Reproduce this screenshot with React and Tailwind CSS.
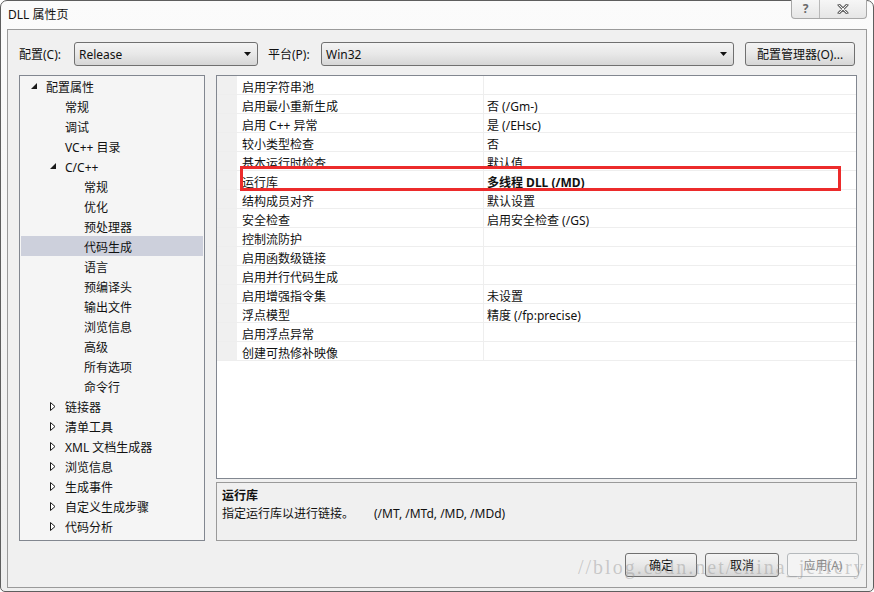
import React from 'react';

const FONT = { fontFamily: '"Noto Sans", "Noto Sans CJK SC", sans-serif' };

const tree = [
  { label: '配置属性', level: 0, open: true },
  { label: '常规', level: 2 },
  { label: '调试', level: 2 },
  { label: 'VC++ 目录', level: 2 },
  { label: 'C/C++', level: 1, open: true },
  { label: '常规', level: 3 },
  { label: '优化', level: 3 },
  { label: '预处理器', level: 3 },
  { label: '代码生成', level: 3, selected: true },
  { label: '语言', level: 3 },
  { label: '预编译头', level: 3 },
  { label: '输出文件', level: 3 },
  { label: '浏览信息', level: 3 },
  { label: '高级', level: 3 },
  { label: '所有选项', level: 3 },
  { label: '命令行', level: 3 },
  { label: '链接器', level: 1, open: false },
  { label: '清单工具', level: 1, open: false },
  { label: 'XML 文档生成器', level: 1, open: false },
  { label: '浏览信息', level: 1, open: false },
  { label: '生成事件', level: 1, open: false },
  { label: '自定义生成步骤', level: 1, open: false },
  { label: '代码分析', level: 1, open: false },
];

const indent = {
  0: 'pl-[10px]',
  1: 'pl-[29px]',
  2: 'pl-[29px]',
  3: 'pl-[48px]',
};

const props = [
  ['启用字符串池', ''],
  ['启用最小重新生成', '否 (/Gm-)'],
  ['启用 C++ 异常', '是 (/EHsc)'],
  ['较小类型检查', '否'],
  ['基本运行时检查', '默认值'],
  ['运行库', '多线程 DLL (/MD)', true],
  ['结构成员对齐', '默认设置'],
  ['安全检查', '启用安全检查 (/GS)'],
  ['控制流防护', ''],
  ['启用函数级链接', ''],
  ['启用并行代码生成', ''],
  ['启用增强指令集', '未设置'],
  ['浮点模型', '精度 (/fp:precise)'],
  ['启用浮点异常', ''],
  ['创建可热修补映像', ''],
];

function Arrow({ open }) {
  if (open) {
    return (
      <svg width="7" height="7" viewBox="0 0 7 7">
        <polygon points="6,0 6,6 0,6" fill="#1a1a1a" />
      </svg>
    );
  }
  return (
    <svg width="6" height="9" viewBox="0 0 6 9">
      <polygon points="0.5,0.5 5,4.5 0.5,8.5" fill="#fff" stroke="#1a1a1a" strokeWidth="1" />
    </svg>
  );
}

function Combo({ value, className }) {
  return (
    <div
      className={`h-[24px] flex items-center border border-[#707070] rounded-[3px] bg-gradient-to-b from-[#f4f4f4] via-[#e8e8e8] to-[#d6d6d6] pl-[4px] pr-[6px] ${className}`}
    >
      <span className="flex-1 text-[12px] text-[#111] pt-[2px]">{value}</span>
      <svg width="7" height="4" viewBox="0 0 7 4">
        <polygon points="0,0 7,0 3.5,4" fill="#111" />
      </svg>
    </div>
  );
}

function Button({ children, disabled, width }) {
  return (
    <div
      className={`${width} h-[24px] flex items-center justify-center pt-[2px] rounded-[3px] text-[12px] border ${
        disabled
          ? 'border-[#b5b9bc] bg-[#f4f4f4] text-[#8a8a8a]'
          : 'border-[#707070] bg-gradient-to-b from-[#f4f4f4] via-[#e8e8e8] to-[#d6d6d6] text-[#111]'
      }`}
    >
      {children}
    </div>
  );
}

export default function App() {
  return (
    <div className="w-[874px] h-[592px] relative overflow-hidden bg-white text-[#111]" style={FONT}>
      <div className="w-full h-full border border-[#5e5e5e] rounded-t-[7px] rounded-b-[5px] bg-gradient-to-b from-[#fbfbfb] to-[#eeeeee] flex flex-col">
        {/* Title bar */}
        <div className="h-[28px] flex items-center pl-[7px] text-[12px] text-[#111]">DLL 属性页</div>

        {/* Client area */}
        <div className="mx-[6px] h-[559px] border border-[#9a9a9a] bg-[#f0f0f0] flex flex-col">
          {/* Config row */}
          <div className="mt-[12px] h-[24px] flex items-center pl-[11px] text-[12px]">
            <span className="w-[55px] pt-[2px]">配置(C):</span>
            <Combo value="Release" className="w-[184px]" />
            <span className="ml-[10px] w-[53px] pt-[2px]">平台(P):</span>
            <Combo value="Win32" className="w-[413px]" />
            <div className="ml-[11px] w-[110px] h-[24px] pt-[2px] flex items-center justify-center border border-[#707070] rounded-[3px] bg-gradient-to-b from-[#f4f4f4] via-[#e8e8e8] to-[#d6d6d6]">
              配置管理器(O)...
            </div>
          </div>

          {/* Panels */}
          <div className="mt-[9px] flex pl-[11px] gap-[11px]">
            {/* Tree */}
            <div className="w-[186px] h-[466px] border border-[#828790] bg-[#f5f5f5] text-[12px]">
              {tree.map((t, i) => (
                <div
                  key={i}
                  className={`h-[20px] flex items-center mx-[1px] ${indent[t.level]} ${t.selected ? 'bg-[#cdd0dc]' : ''}`}
                >
                  <span className="w-[15px] flex items-center">
                    {t.level < 2 && <Arrow open={t.open} />}
                  </span>
                  <span className="pt-[4px]">{t.label}</span>
                </div>
              ))}
            </div>

            {/* Right column */}
            <div className="w-[641px] flex flex-col gap-[3px]">
              <div className="relative h-[404px] border border-[#828790] bg-white text-[12px]">
                {props.map(([name, value, bold], i) => (
                  <div key={i} className="h-[19px] flex border-b border-[#eeeeee]">
                    <div className="w-[20px] bg-[#f0f0f0]" />
                    <div className="w-[246px] pl-[5px] pt-[5px] flex items-center">{name}</div>
                    <div
                      className={`flex-1 pl-[3px] pt-[5px] flex items-center border-l border-[#eeeeee] ${bold ? 'font-bold' : ''}`}
                    >
                      {value}
                    </div>
                  </div>
                ))}
                {/* highlight box */}
                <div className="absolute left-[23px] top-[90px] w-[601px] h-[25px] border-[3px] border-[#ec2b2b]" />
              </div>

              <div className="h-[59px] border border-[#9a9a9a] bg-[#f0f0f0] px-[5px] pt-[4px] text-[12px]">
                <div className="font-bold leading-[18px]">运行库</div>
                <div className="leading-[18px]">
                  指定运行库以进行链接。<span className="ml-[20px]">(/MT, /MTd, /MD, /MDd)</span>
                </div>
              </div>
            </div>
          </div>

          {/* Buttons */}
          <div className="mt-[12px] flex justify-end pr-[7px] gap-[8px]">
            <Button width="w-[72px]">确定</Button>
            <Button width="w-[74px]">取消</Button>
            <Button width="w-[72px]" disabled>
              应用(A)
            </Button>
          </div>
        </div>
      </div>

      {/* Caption buttons */}
      <div className="absolute top-0 right-[7px] w-[76px] h-[19px] flex border border-t-0 border-[#a8a8a8] rounded-b-[4px] bg-gradient-to-b from-[#f6f6f6] to-[#e6e6e6]">
        <div className="w-[28px] flex items-center justify-center border-r border-[#b8b8b8] text-[12px] font-bold text-[#6a6a6a]">
          ?
        </div>
        <div className="flex-1 flex items-center justify-center">
          <svg width="12" height="10" viewBox="0 0 12 10">
            <path d="M2 1 L10 9 M10 1 L2 9" stroke="#6a6a6a" strokeWidth="3" strokeLinecap="round" />
            <path d="M2 1 L10 9 M10 1 L2 9" stroke="#f4f4f4" strokeWidth="1" strokeLinecap="round" />
          </svg>
        </div>
      </div>

      {/* Watermark */}
      <div
        className="absolute left-[578px] top-[555px] text-[20px] leading-[24px] tracking-[2px] text-[rgba(150,150,150,0.45)] pointer-events-none whitespace-nowrap"
        style={{ fontFamily: '"Liberation Serif", serif' }}
      >
        //blog.csdn.net/china_jeffery
      </div>
    </div>
  );
}
